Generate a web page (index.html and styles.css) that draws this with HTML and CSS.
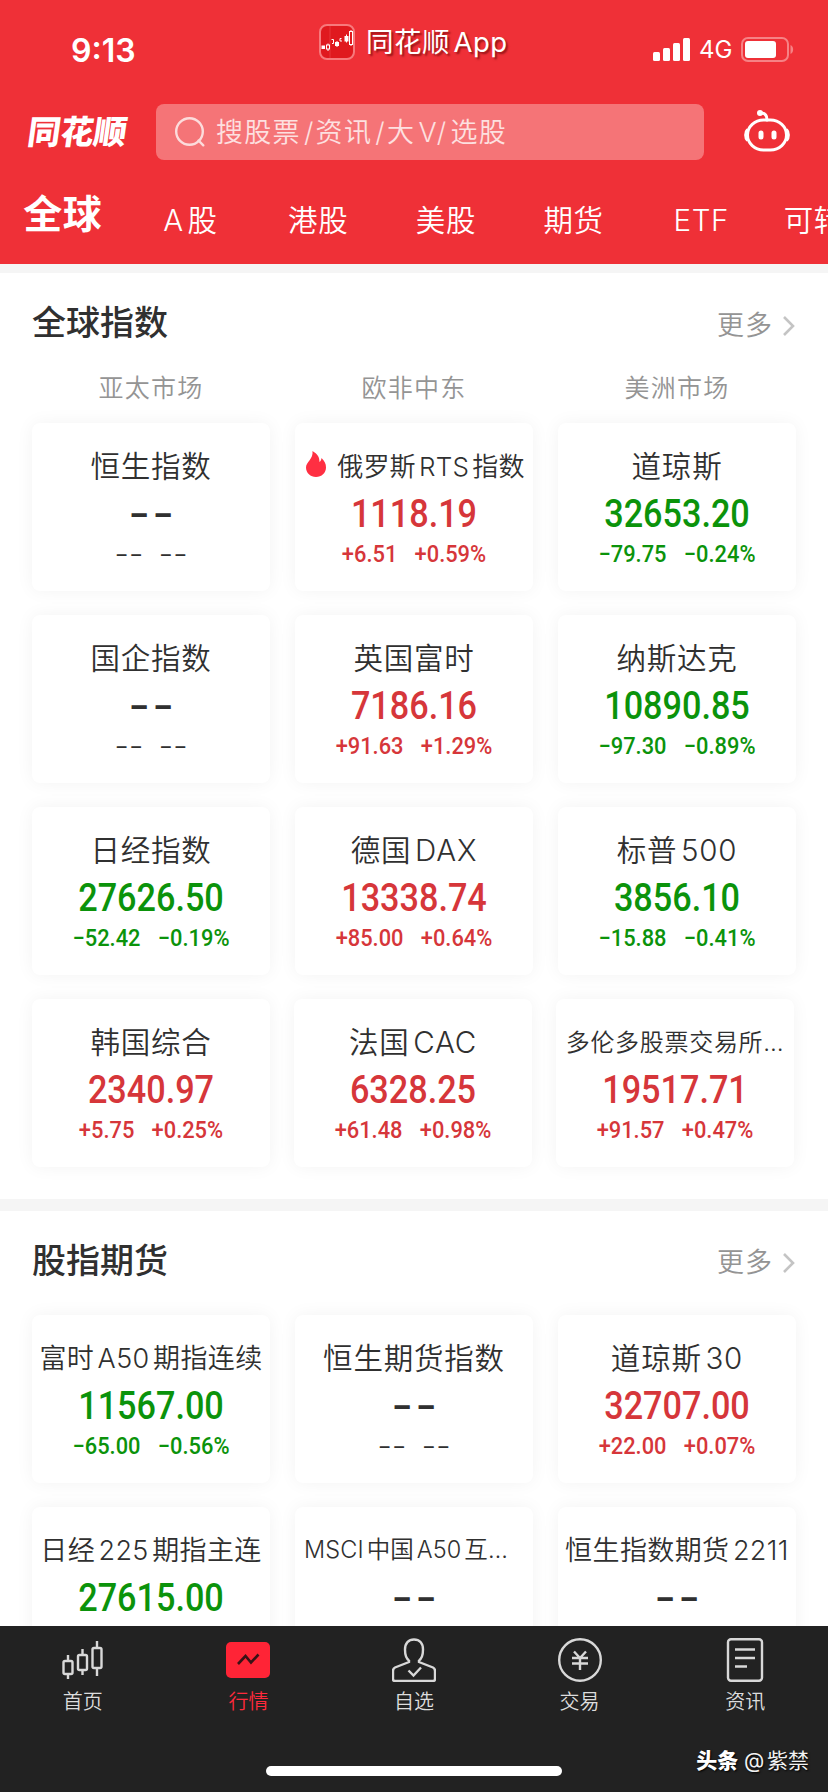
FILE: index.html
```html
<!DOCTYPE html>
<html lang="zh-CN">
<head>
  <meta charset="UTF-8">
  <title>同花顺 - 行情</title>
  <link rel="stylesheet" href="styles.css">
</head>
<body>

  <header class="header">
    <div class="status">
      <span class="time">9:13</span>
      <div class="app-name">
        <svg class="app-icon" viewBox="0 0 36 36">
          <rect x="1" y="1" width="34" height="34" rx="7" fill="#e0191f" stroke="#f7797c" stroke-width="2"/>
          <path d="M11 2v32" stroke="#ee4a4e" stroke-width="0.6"/>
          <g fill="#fff"><rect x="2.500" y="21.500" width="3.500" height="3.500"/><rect x="16" y="18" width="4" height="4"/><rect x="25.500" y="12" width="4" height="5.500"/></g>
          <g fill="none" stroke="#fff"><rect x="7.500" y="21" width="3" height="4"/><path d="M9 19.500V21M9 25v2M12.500 15.500h2v4h-1.500M22.500 14.500h-1.500v2.500h2M27.500 10.500v8M18 17v6"/><rect x="30.500" y="7.500" width="3" height="13"/><path d="M32 6v1.500M32 20.500V22"/></g>
        </svg>
        <span>同花顺App</span>
      </div>
      <div class="signal">
        <svg width="37" height="23" viewBox="0 0 37 23" fill="#fff">
          <rect x="0" y="14" width="7" height="9" rx="1.500"/><rect x="10" y="10" width="7" height="13" rx="1.500"/>
          <rect x="20" y="5" width="7" height="18" rx="1.500"/><rect x="30" y="0" width="7" height="23" rx="1.500"/>
        </svg>
        <span class="net">4G</span>
        <svg width="53" height="25" viewBox="0 0 53 25">
          <rect x="1" y="1" width="46" height="23" rx="6" fill="none" stroke="#f68285" stroke-width="2"/>
          <rect x="4" y="4" width="31" height="17" rx="3" fill="#fff"/>
          <path d="M49.500 8c3.500 1.500 3.500 7.500 0 9z" fill="#f68285"/>
        </svg>
      </div>
    </div>

    <div class="search-row">
      <span class="logo">同花顺</span>
      <div class="search">
        <svg width="32" height="32" viewBox="0 0 32 32" fill="none" stroke="#fcdcdc" stroke-width="2.400" stroke-linecap="round">
          <circle cx="15.500" cy="15.500" r="13.300"/><path d="M24.500 24.500l4.800 4.800"/>
        </svg>
        <span>搜股票<i>/</i>资讯<i>/</i>大V/<b></b>选股</span>
      </div>
      <svg class="robot" width="48" height="44" viewBox="0 0 48 44" fill="none" stroke="#fff" stroke-width="3">
        <rect x="4.500" y="11" width="39" height="30" rx="16"/>
        <path d="M17 4h1c4 0 6 2 6 7" stroke-linecap="round"/>
        <circle cx="17" cy="4" r="3" fill="#fff" stroke="none"/>
        <path d="M4.500 20.500C2 23 2 29 4.500 31.500M43.500 20.500C46 23 46 29 43.500 31.500"/>
        <path d="M18 24v4M31 24v4" stroke-width="5" stroke-linecap="round"/>
      </svg>
    </div>

    <nav class="markets">
      <a class="active">全球</a>
      <a>A股</a>
      <a>港股</a>
      <a>美股</a>
      <a>期货</a>
      <a>ETF</a>
      <a>可转债</a>
    </nav>
  </header>

  <main>
    <section class="block">
      <div class="block-head">
        <h2>全球指数</h2>
        <a class="more">更多<svg width="14" height="22" viewBox="0 0 14 22"><path d="M2 2l9 9-9 9"/></svg></a>
      </div>
      <div class="regions"><span>亚太市场</span><span>欧非中东</span><span>美洲市场</span></div>
      <div class="cards">
        <div class="card none"><h3>恒生指数</h3><p class="price">--</p><p class="change"><span>--</span><span>--</span></p></div>
        <div class="card up"><h3 class="s26"><svg class="fire" width="22" height="28" viewBox="0 0 22 28"><path d="M7.500 1c5 3 7 6 7 11 1.200-1 2-2.500 2-4 3 3 4.500 5.500 4.500 9.500C21 23 16.500 27 11 27S1 23 1 17.500C1 12 8.500 9 7.500 1z"/></svg>俄罗斯RTS指数</h3><p class="price">1118.19</p><p class="change"><span>+6.51</span><span>+0.59%</span></p></div>
        <div class="card down"><h3>道琼斯</h3><p class="price">32653.20</p><p class="change"><span>−79.75</span><span>−0.24%</span></p></div>

        <div class="card none"><h3>国企指数</h3><p class="price">--</p><p class="change"><span>--</span><span>--</span></p></div>
        <div class="card up"><h3>英国富时</h3><p class="price">7186.16</p><p class="change"><span>+91.63</span><span>+1.29%</span></p></div>
        <div class="card down"><h3>纳斯达克</h3><p class="price">10890.85</p><p class="change"><span>−97.30</span><span>−0.89%</span></p></div>

        <div class="card down"><h3>日经指数</h3><p class="price">27626.50</p><p class="change"><span>−52.42</span><span>−0.19%</span></p></div>
        <div class="card up"><h3>德国DAX</h3><p class="price">13338.74</p><p class="change"><span>+85.00</span><span>+0.64%</span></p></div>
        <div class="card down"><h3>标普500</h3><p class="price">3856.10</p><p class="change"><span>−15.88</span><span>−0.41%</span></p></div>
      </div>
      <div class="cards tight">
        <div class="card up"><h3>韩国综合</h3><p class="price">2340.97</p><p class="change"><span>+5.75</span><span>+0.25%</span></p></div>
        <div class="card up"><h3>法国CAC</h3><p class="price">6328.25</p><p class="change"><span>+61.48</span><span>+0.98%</span></p></div>
        <div class="card up"><h3 class="s24">多伦多股票交易所…</h3><p class="price">19517.71</p><p class="change"><span>+91.57</span><span>+0.47%</span></p></div>
      </div>
    </section>

    <section class="block futures">
      <div class="block-head">
        <h2>股指期货</h2>
        <a class="more">更多<svg width="14" height="22" viewBox="0 0 14 22"><path d="M2 2l9 9-9 9"/></svg></a>
      </div>
      <div class="cards">
        <div class="card down"><h3 class="s27">富时A50期指连续</h3><p class="price">11567.00</p><p class="change"><span>−65.00</span><span>−0.56%</span></p></div>
        <div class="card none"><h3>恒生期货指数</h3><p class="price">--</p><p class="change"><span>--</span><span>--</span></p></div>
        <div class="card up"><h3>道琼斯30</h3><p class="price">32707.00</p><p class="change"><span>+22.00</span><span>+0.07%</span></p></div>

        <div class="card down"><h3 class="s27">日经225期指主连</h3><p class="price">27615.00</p></div>
        <div class="card none"><h3 class="s23">MSCI中国A50互…</h3><p class="price">--</p></div>
        <div class="card none"><h3 class="s27">恒生指数期货2211</h3><p class="price">--</p></div>
      </div>
    </section>
  </main>

  <footer class="tabbar">
    <nav>
      <a>
        <svg width="44" height="44" viewBox="0 0 44 44">
          <rect x="2.500" y="23" width="9" height="13" rx="1.500"/><path d="M7 17v6M7 36v5"/>
          <rect x="17" y="17" width="9" height="15" rx="1.500"/><path d="M21.500 11v6M21.500 32v5"/>
          <rect x="31.500" y="10" width="9" height="20" rx="1.500"/><path d="M36 3v7M36 30v8"/>
        </svg>
        <span>首页</span>
      </a>
      <a class="active">
        <svg width="44" height="44" viewBox="0 0 44 44">
          <rect x="0" y="4" width="44" height="36" rx="5" fill="#ff2436" stroke="none"/>
          <path d="M12 26l7.500-8 5.500 6.500 7.500-8" stroke="#3a1216" stroke-width="2.600"/>
        </svg>
        <span>行情</span>
      </a>
      <a>
        <svg width="44" height="44" viewBox="0 0 44 44">
          <path d="M17 22.500C13.500 20 13 16 13 11.500 13 5 16.500 1.500 22 1.500S31 5 31 11.500C31 16 30.500 20 27 22.500M17 22v2L3 29.500Q1 30.500 1 33v8q0 2 2 2h38q2 0 2-2v-8q0-2.500-2-3.500L27 24v-2"/>
          <path d="M16.500 32.500l5 5 7.500-8"/>
        </svg>
        <span>自选</span>
      </a>
      <a>
        <svg width="44" height="44" viewBox="0 0 44 44">
          <circle cx="22" cy="22" r="20.800"/>
          <path d="M16 13.500l6 6.500 6-6.500M14 20h16M14 25.500h16M22 20v12"/>
        </svg>
        <span>交易</span>
      </a>
      <a>
        <svg width="44" height="44" viewBox="0 0 44 44">
          <rect x="5" y="1.200" width="34" height="41.600" rx="3"/>
          <path d="M12 11.500h20M12 20h20M12 28.500h12"/>
        </svg>
        <span>资讯</span>
      </a>
    </nav>
    <div class="home-line"></div>
    <div class="watermark"><b>头条</b> @紫禁</div>
  </footer>

</body>
</html>
```

FILE: styles.css
```css
* {
  box-sizing: border-box;
}
body {
  margin: 0;
  width: 828px;
  height: 1792px;
  overflow: hidden;
  display: flex;
  flex-direction: column;
  background-color: #fff;
  color: #303030;
  font-family: Inter, 'Noto Sans CJK SC', sans-serif;
  text-autospace: normal;
}
h2, h3, p {
  margin: 0;
  font-weight: normal;
}
svg {
  display: block;
  flex: none;
}
main {
  height: 1528px;
  overflow: hidden;
}

/* header */
.header {
  flex: none;
  height: 264px;
  background-color: #ef3037;
  color: #fff;
  overflow: hidden;
}
.status {
  height: 100px;
  display: grid;
  grid-template-columns: 319px 1fr 175px;
}
.time {
  padding: 31px 0 0 71px;
  font-size: 32px;
  line-height: 39px;
  font-weight: 600;
}
.app-name {
  display: flex;
  gap: 11px;
  padding-top: 24px;
  height: 60px;
  align-items: center;
  font-size: 27.5px;
  letter-spacing: 0.5px;
  line-height: 32px;
  white-space: nowrap;
  text-shadow: 2px 2px 2px rgba(90, 0, 0, 0.6);
}
.app-name span {
  margin-top: -1px;
}
.app-icon {
  width: 36px;
  height: 36px;
}
.signal {
  display: flex;
  align-items: center;
  height: 25px;
  margin-top: 37px;
}
.net {
  width: 42px;
  margin-left: 9px;
  font-size: 24px;
  line-height: 24px;
}
.search-row {
  height: 64px;
  display: flex;
  align-items: center;
}
.logo {
  width: 128px;
  margin-right: 28px;
  padding-left: 28px;
  font-size: 33px;
  line-height: 40px;
  font-weight: 900;
  transform: skewX(-8deg);
  white-space: nowrap;
}
.search {
  width: 548px;
  height: 56px;
  display: flex;
  align-items: center;
  gap: 10px;
  padding-left: 18px;
  border-radius: 8px;
  background-color: #f57477;
  color: #fde0e0;
  font-size: 27px;
  font-weight: 350;
  letter-spacing: 1.3px;
  line-height: 32px;
}
.search span {
  margin-top: 1px;
}
.search i {
  margin: 0 1px 0 3px;
  font-style: normal;
}
.search b {
  margin-left: 3px;
}
.robot {
  margin: -2px 0 0 39px;
}
.markets {
  display: flex;
  margin-left: -1px;
  height: 100px;
}
.markets a {
  flex: none;
  width: 127.7px;
  padding-top: 36px;
  text-align: center;
  font-size: 29.5px;
  font-weight: 350;
  line-height: 40px;
  letter-spacing: 0.7px;
  white-space: nowrap;
}
.markets .active {
  padding-top: 30px;
  font-size: 39px;
  font-weight: 700;
}

/* index blocks */
.block {
  border-top: 9px solid #f5f5f5;
  height: 935px;
  padding: 0 32px;
}
.block.futures {
  border-top-width: 12px;
}
.block-head {
  display: flex;
  justify-content: space-between;
  height: 90px;
  padding-top: 30px;
}
.futures .block-head {
  height: 104px;
  padding-top: 30px;
}
.block-head h2 {
  font-size: 34px;
  line-height: 40px;
  font-weight: 500;
}
.more {
  display: flex;
  align-items: center;
  gap: 9px;
  height: 46px;
  font-size: 27px;
  font-weight: 350;
  letter-spacing: 1px;
  line-height: 40px;
  color: #949494;
}
.futures .more {
  margin-top: -1px;
}
.more svg {
  fill: none;
  stroke: #c4c4c4;
  stroke-width: 2.6;
}
.regions {
  display: grid;
  grid-template-columns: repeat(3, 238px);
  gap: 25px;
  height: 60px;
  text-align: center;
  font-size: 25px;
  font-weight: 350;
  letter-spacing: 1.3px;
  line-height: 50px;
  color: #949494;
}
.cards {
  display: grid;
  grid-template-columns: repeat(3, 238px);
  grid-auto-rows: 168px;
  gap: 24px 25px;
}
.tight {
  margin-top: 24px;
  column-gap: 24px;
}
.card {
  padding-top: 21px;
  border-radius: 8px;
  background-color: #fff;
  box-shadow: 0 0 18px rgba(0, 0, 0, 0.05);
  text-align: center;
  white-space: nowrap;
}
.card h3 {
  display: flex;
  justify-content: center;
  align-items: center;
  height: 40px;
  font-size: 29.5px;
  font-weight: 350;
  letter-spacing: 0.8px;
}
.card .s27 { font-size: 27px; letter-spacing: 0.4px; }
.card .s26 { font-size: 26px; letter-spacing: 0.2px; padding-left: 2px; }
.card .s24 { font-size: 24px; letter-spacing: 0.7px; }
.card .s23 { font-size: 23.5px; letter-spacing: 0.1px; padding-right: 16px; }
.fire {
  margin-right: 10px;
  fill: #ff2f42;
}
.price {
  margin-top: 10px;
  font-family: Roboto, sans-serif;
  font-size: 38px;
  line-height: 40px;
  font-weight: 500;
  transform: scaleX(0.9);
}
.change {
  display: flex;
  justify-content: center;
  gap: 19px;
  margin-top: 6px;
  font-family: Roboto, sans-serif;
  font-size: 24px;
  line-height: 28px;
  font-weight: 500;
  transform: scaleX(0.91);
}
.up .price, .up .change {
  color: #d6363a;
}
.down .price, .down .change {
  color: #0b930b;
}
/* no quote yet: wide dashes */
.none .price {
  padding-left: 3px;
  letter-spacing: 2.6px;
  transform: scaleX(1.55);
}
.none .change {
  gap: 9px;
  padding-left: 2px;
  font-weight: 400;
  letter-spacing: 1.9px;
  transform: scaleX(1.7);
}

.tabbar {
  position: absolute;
  top: 1626px;
  left: 0;
  width: 828px;
  height: 166px;
  background-color: #222;
  color: #ddd;
}
.tabbar nav {
  display: grid;
  grid-template-columns: repeat(5, 1fr);
  height: 140px;
}
.tabbar a {
  display: flex;
  flex-direction: column;
  align-items: center;
  gap: 6px;
  padding-top: 12px;
  font-size: 20px;
  font-weight: 350;
  line-height: 28px;
}
.tabbar a svg {
  fill: none;
  stroke: #d8d8d8;
  stroke-width: 2.4;
}
.tabbar .active {
  color: #ff2a3c;
}
.home-line {
  width: 296px;
  height: 10px;
  margin: 0 auto;
  border-radius: 5px;
  background-color: #fff;
}
.watermark {
  position: absolute;
  right: 19px;
  top: 120px;
  font-size: 21px;
  line-height: 30px;
  color: #f2f2f2;
  text-shadow: 1px 1px 2px #000;
}
.watermark b {
  font-weight: 900;
  color: #fff;
}
```
